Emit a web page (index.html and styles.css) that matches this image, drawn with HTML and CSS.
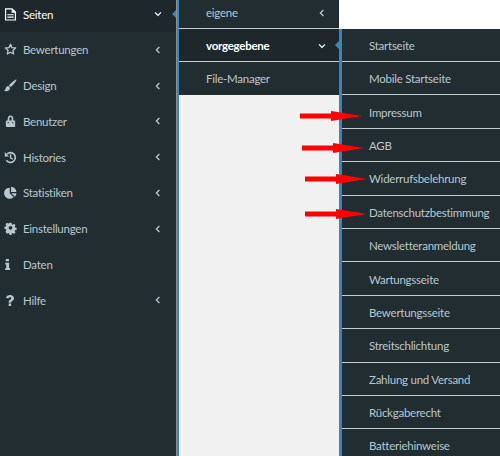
FILE: index.html
```html
<!DOCTYPE html>
<html lang="de">
<head>
<meta charset="utf-8">
<title>Seiten</title>
<link rel="stylesheet" href="styles.css">
</head>
<body>
<div class="app">
  <nav class="side">
    <a class="side-item active">
      <svg class="ico" viewBox="0 0 14 14"><path fill="none" stroke="currentColor" stroke-width="1.3" d="M1.700 1h7l3.600 3.400v8.500H1.700z"/><path fill="currentColor" d="M8.200 1h1l3 3v1H8.200zM3.600 6.600h6.800v1.300H3.600zM3.600 9.200h6.800v1.300H3.600z"/></svg>
      <span class="label">Seiten</span>
      <svg class="chev" viewBox="0 0 8 8"><path d="M1 2.400 4 5.400 7 2.400" /></svg>
      <i class="caret"></i>
    </a>
    <a class="side-item">
      <svg class="ico" viewBox="0 0 14 14"><path fill="none" stroke="currentColor" stroke-width="1.400" stroke-linejoin="round" d="M7 1.500 8.600 5l3.900.4-2.900 2.600.8 3.800L7 9.900l-3.400 1.900.8-3.800L1.500 5.400 5.400 5z"/></svg>
      <span class="label">Bewertungen</span>
      <svg class="chev" viewBox="0 0 8 8"><path d="M5.400 1 2.400 4 5.400 7"/></svg>
    </a>
    <a class="side-item">
      <svg class="ico" viewBox="0 0 14 14"><path fill="currentColor" d="M13.300.6c.5.300-.6 2.300-2.300 4.300C9.500 6.700 7.900 8.300 7 8.700L5.200 7C6 6 7.600 4.400 9.400 2.900 11 1.600 12.800.3 13.300.6zM4.600 7.600l1.900 1.800c0 2-1.500 3.600-3.500 3.700-1.100.1-2.200-.2-3-.8.9-.1 1.300-.5 1.500-1.300.3-2 1.500-3.200 3.100-3.400z"/></svg>
      <span class="label">Design</span>
      <svg class="chev" viewBox="0 0 8 8"><path d="M5.400 1 2.400 4 5.400 7"/></svg>
    </a>
    <a class="side-item">
      <svg class="ico" viewBox="0 0 14 14"><path fill="currentColor" fill-rule="evenodd" d="M4 6V3.900C4 1.900 5.300.6 7 .6s3 1.300 3 3.300V6h1.200c.5 0 .8.300.8.800v5.400c0 .5-.3.800-.8.800H2.800c-.5 0-.8-.3-.8-.8V6.800c0-.5.300-.8.800-.8zm1.800 0h2.400V3.900C8.200 2.800 7.700 2.200 7 2.200s-1.200.6-1.200 1.700zM3.800 7.800v1.100h1.500V7.800zm4.900 0v1.100h1.500V7.800z"/></svg>
      <span class="label">Benutzer</span>
      <svg class="chev" viewBox="0 0 8 8"><path d="M5.400 1 2.400 4 5.400 7"/></svg>
    </a>
    <a class="side-item">
      <svg class="ico" viewBox="0 0 14 14"><path fill="none" stroke="currentColor" stroke-width="1.700" d="M3.200 3.200A5.300 5.300 0 1 1 2.500 10"/><path fill="currentColor" d="M.8 1.200 5.400 5.800H.8zM6.300 3.600h1.500v3.300L10 8.300l-.8 1.200-2.900-1.800z"/></svg>
      <span class="label">Histories</span>
      <svg class="chev" viewBox="0 0 8 8"><path d="M5.400 1 2.400 4 5.400 7"/></svg>
    </a>
    <a class="side-item">
      <svg class="ico" viewBox="0 0 14 14"><path fill="currentColor" d="M6.200 1.800V7.800l4.200 4.200A6 6 0 1 1 6.200 1.800zM7.600.8a6 6 0 0 1 5.800 5.700H7.600zM7.900 7.700h5.500a6 6 0 0 1-1.700 3.800z"/></svg>
      <span class="label">Statistiken</span>
      <svg class="chev" viewBox="0 0 8 8"><path d="M5.400 1 2.400 4 5.400 7"/></svg>
    </a>
    <a class="side-item">
      <svg class="ico" viewBox="0 0 14 14"><path fill="currentColor" fill-rule="evenodd" d="M5.800.8h2.400l.4 1.800 1.100.5 1.600-1 1.700 1.700-1 1.600.5 1.100 1.800.4v2.400l-1.800.4-.5 1.100 1 1.600-1.700 1.700-1.600-1-1.100.5-.4 1.800H5.800l-.4-1.800-1.100-.5-1.600 1L1 11.200l1-1.600-.5-1.100L-.3 8V5.600l1.800-.4.500-1.100-1-1.600L2.700.8l1.600 1 1.100-.5zM7 4.700a2.200 2.200 0 1 0 0 4.400 2.200 2.200 0 0 0 0-4.400z" transform="translate(.7 .1) scale(.9)"/></svg>
      <span class="label">Einstellungen</span>
      <svg class="chev" viewBox="0 0 8 8"><path d="M5.400 1 2.400 4 5.400 7"/></svg>
    </a>
    <a class="side-item">
      <svg class="ico" viewBox="0 0 14 14"><path fill="currentColor" d="M1.500 1h3.400v2.600H1.500zM.9 5.100h4.200v5.900h1.100v2H.9v-2h1.100V7.100H.9z" transform="translate(.4 0)"/></svg>
      <span class="label">Daten</span>
    </a>
    <a class="side-item">
      <svg class="ico" viewBox="0 0 14 14"><path fill="currentColor" d="M2 4.100C2.600 2.300 4.200 1 6.500 1c2.400 0 4.300 1.500 4.300 3.600 0 1.500-.9 2.300-1.900 3-.8.500-1.200.9-1.200 1.500v.4H5V8.800c0-1.300.7-2 1.600-2.600.8-.6 1.300-.9 1.300-1.500 0-.7-.6-1.200-1.400-1.200-.9 0-1.500.5-1.900 1.400zM5 10.300h2.700V13H5z"/></svg>
      <span class="label">Hilfe</span>
      <svg class="chev" viewBox="0 0 8 8"><path d="M5.400 1 2.400 4 5.400 7"/></svg>
    </a>
  </nav>

  <div class="col-two">
    <ul class="menu menu-two">
      <li class="row">eigene<svg class="chev" viewBox="0 0 8 8"><path d="M5.400 1 2.400 4 5.400 7"/></svg></li>
      <li class="row active">vorgegebene<svg class="chev" viewBox="0 0 8 8"><path d="M1 2.400 4 5.400 7 2.400"/></svg><i class="caret"></i></li>
      <li class="row">File-Manager</li>
    </ul>
  </div>

  <div class="col-three">
    <ul class="menu menu-three">
      <li class="row">Startseite</li>
      <li class="row">Mobile Startseite</li>
      <li class="row">Impressum</li>
      <li class="row">AGB</li>
      <li class="row">Widerrufsbelehrung</li>
      <li class="row">Datenschutzbestimmung</li>
      <li class="row">Newsletteranmeldung</li>
      <li class="row">Wartungsseite</li>
      <li class="row">Bewertungsseite</li>
      <li class="row">Streitschlichtung</li>
      <li class="row">Zahlung und Versand</li>
      <li class="row">Rückgaberecht</li>
      <li class="row">Batteriehinweise</li>
    </ul>
  </div>

  <svg class="arrow a1" viewBox="0 0 62 10"><path d="M0 2.500H31V0L62 5 31 10V7.500H0z"/></svg>
  <svg class="arrow a2" viewBox="0 0 62 10"><path d="M0 2.500H31V0L62 5 31 10V7.500H0z"/></svg>
  <svg class="arrow a3" viewBox="0 0 62 10"><path d="M0 2.500H31V0L62 5 31 10V7.500H0z"/></svg>
  <svg class="arrow a4" viewBox="0 0 62 10"><path d="M0 2.500H31V0L62 5 31 10V7.500H0z"/></svg>
</div>
</body>
</html>
```
FILE: styles.css
```css
* { box-sizing: border-box; }
html, body { margin: 0; padding: 0; }
body { width: 500px; height: 456px; overflow: hidden; background: #fff; font-family: Lato, "Open Sans", sans-serif; font-size: 11.5px; letter-spacing: -0.25px; }
.app { position: relative; display: flex; width: 500px; height: 456px; overflow: hidden; }

.side { width: 177px; flex: none; background: #222d32; border-right: 1px solid #8a9196; color: #b8c7ce; display: flex; flex-direction: column; }
.side-item { position: relative; display: flex; align-items: center; height: 35.75px; padding: 0 14px 0 4px; }
.side-item.active { height: 32px; padding-bottom: 4px; color: #fff; background: #1e282c; }
.ico { width: 13px; height: 13px; flex: none; margin-right: 6px; }
.label { flex: 1; }
.chev { width: 8px; height: 8px; flex: none; fill: none; stroke: currentColor; stroke-width: 1.3; }
.caret { position: absolute; right: 0; top: 10px; width: 0; height: 0; border: 4px solid transparent; border-right: 4px solid #3a86b8; border-left: 0; }

.col-two { width: 162px; flex: none; background: #f1f1f1; border-left: 2px solid #3a86b8; }
.col-three { width: 161px; flex: none; padding-top: 28.6px; background: #fff; }

.menu { list-style: none; margin: 0; padding: 0; background: #222d32; color: #b8c7ce; }
.menu-three { border-left: 3px solid #3a86b8; height: 428px; overflow: hidden; }
.row { position: relative; display: flex; align-items: center; justify-content: space-between; padding: 1px 14px 0 27px; border-bottom: 1px solid #c8ccce; height: 33.4px; }
.menu-two .row { padding-right: 13px; }
.menu-two .row:first-child { height: 29px; padding-top: 0; padding-bottom: 3px; }
.menu-two .row:last-child { border-bottom: 0; height: 33px; padding-top: 0; }
.row.active { color: #fff; font-weight: 700; background: #1e282c; }
.row .caret { top: 12px; right: 0; }

.arrow { position: absolute; fill: #ff0000; height: 10px; width: 62px; }
.a1 { left: 300px; top: 111px; }
.a2 { left: 302px; top: 143px; }
.a3 { left: 305px; top: 174px; }
.a4 { left: 305px; top: 209px; }
```
